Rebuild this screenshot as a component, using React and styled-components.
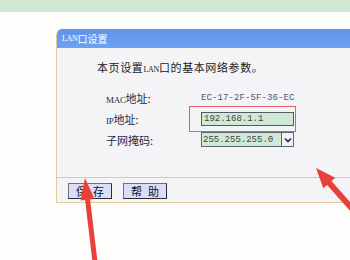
import React from "react";
import styled, { createGlobalStyle } from "styled-components";

const Global = createGlobalStyle`
  html, body { margin: 0; padding: 0; }
  body {
    width: 350px; height: 260px; overflow: hidden;
    background: #fdfdfb;
    font-family: "Noto Sans CJK SC", "Liberation Sans", sans-serif;
  }
`;

const Page = styled.div`
  position: relative;
  width: 350px;
  height: 260px;
  overflow: hidden;
`;

const TopBand = styled.div`
  height: 12px;
  background: #cfe8d2;
`;

const Stage = styled.div`
  padding: 17px 0 0 56px;
`;

const Panel = styled.div`
  width: 320px;
  border-left: 1px solid #e2c99a;
  border-top-left-radius: 6px;
  overflow: hidden;
`;

const Header = styled.div`
  height: 19px;
  display: flex;
  align-items: center;
  padding-left: 5px;
  background: linear-gradient(#5e93ea, #6ca2f2);
  color: #fff;
  font-size: 10px;
`;

const Latin = styled.span`
  font-family: "Liberation Serif", serif;
  font-size: ${p => p.$size || 8}px;
  letter-spacing: -0.3px;
`;

const Body = styled.div`
  background: #f4f4f7;
  padding: 12px 0 27px 40px;
  color: #222;
`;

const Intro = styled.div`
  font-size: 11px;
  line-height: 14px;
  height: 14px;
  letter-spacing: 0.6px;
`;

const Form = styled.div`
  margin-top: 13px;
  display: grid;
  grid-template-columns: 95px auto;
  grid-auto-rows: 21px;
  align-items: center;
  padding-left: 9px;
`;

const Label = styled.div`
  font-size: 11px;
  color: #1e2a44;
`;

const Mono = styled.div`
  font-family: "Liberation Mono", monospace;
  font-size: 9px;
  color: #4a5874;
  letter-spacing: 0.1px;
`;

const FieldCell = styled.div`
  position: relative;
  display: flex;
  align-items: center;
`;

const TextBox = styled.div`
  box-sizing: border-box;
  width: 93px;
  height: 14px;
  background: #cfe9d6;
  border: 1px solid #4f5c66;
  padding-left: 2px;
  display: flex;
  align-items: center;
  font-family: "Liberation Mono", monospace;
  font-size: 9px;
  color: #444;
`;

const Highlight = styled.div`
  position: absolute;
  left: -12px;
  top: -6px;
  width: 105px;
  height: 24px;
  border: 1px solid #e0606a;
  pointer-events: none;
`;

const Select = styled.div`
  box-sizing: border-box;
  width: 93px;
  height: 15px;
  display: flex;
  border: 1px solid #5a6672;
  background: #cfe9d6;
`;

const SelectText = styled.div`
  flex: 1;
  display: flex;
  align-items: center;
  padding-left: 1px;
  font-family: "Liberation Mono", monospace;
  font-size: 9px;
  color: #444;
  border-right: 1px solid #5a6672;
`;

const SelectBtn = styled.div`
  width: 11px;
  display: flex;
  align-items: center;
  justify-content: center;
  background: #f0f2f6;
`;

const Footer = styled.div`
  background: #f4f4f7;
  border-top: 1px solid #e2c99a;
  border-bottom: 1px solid #e2c99a;
  box-sizing: border-box;
  padding: 5px 0 0 11px;
  display: flex;
  gap: 11px;
  height: 26px;
`;

const Button = styled.div`
  box-sizing: border-box;
  width: 44px;
  height: 16px;
  background: #d9ddf5;
  border: 1px solid #6b6f80;
  border-right-color: #2a2d38;
  border-bottom-color: #2a2d38;
  display: flex;
  align-items: center;
  justify-content: center;
  font-size: 11px;
  color: #111;
  white-space: nowrap;
  letter-spacing: 6px;
  padding-left: 6px;
`;

const Arrows = styled.svg`
  position: absolute;
  left: 0;
  top: 0;
  pointer-events: none;
`;

export default function App() {
  return (
    <Page>
      <Global />
      <TopBand />
      <Stage>
        <Panel>
          <Header>
            <Latin $size={8}>LAN</Latin>口设置
          </Header>
          <Body>
            <Intro>
              本页设置<Latin $size={8}>LAN</Latin>口的基本网络参数。
            </Intro>
            <Form>
              <Label>
                <Latin $size={9}>MAC</Latin>地址:
              </Label>
              <Mono>EC-17-2F-5F-36-EC</Mono>
              <Label>
                <Latin $size={9}>IP</Latin>地址:
              </Label>
              <FieldCell>
                <TextBox>192.168.1.1</TextBox>
                <Highlight />
              </FieldCell>
              <Label>子网掩码:</Label>
              <FieldCell>
                <Select>
                  <SelectText>255.255.255.0</SelectText>
                  <SelectBtn>
                    <svg width="8" height="6" viewBox="0 0 8 6">
                      <path d="M1 1.5 L4 4.5 L7 1.5" fill="none" stroke="#1c2a4a" strokeWidth="1.6" />
                    </svg>
                  </SelectBtn>
                </Select>
              </FieldCell>
            </Form>
          </Body>
          <Footer>
            <Button>保存</Button>
            <Button>帮助</Button>
          </Footer>
        </Panel>
      </Stage>
      <Arrows width="350" height="260" viewBox="0 0 350 260">
        <polygon
          fill="#e8413b"
          points="85,178 94.5,199 90.1,199.5 97.5,261.7 92.5,262.3 85.1,200.1 80.6,200.6"
        />
        <polygon
          fill="#e8413b"
          points="316,168 335.3,177.7 331.5,181 357.2,210 352.8,214 327.1,185 323.3,188.3"
        />
      </Arrows>
    </Page>
  );
}
